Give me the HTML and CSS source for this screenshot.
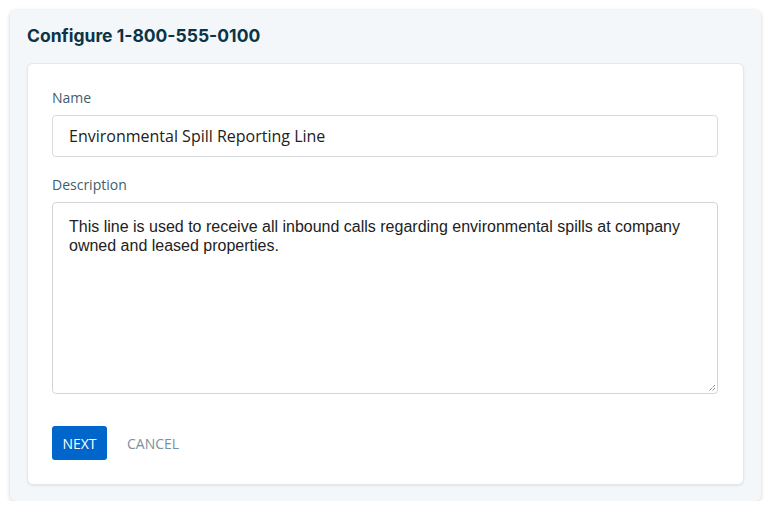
FILE: index.html
```html
<!DOCTYPE html>
<html>
<head>
<meta charset="utf-8">
<link rel="stylesheet" href="styles.css">
</head>
<body>
<div class="panel">
  <h2 class="title">Configure 1-800-555-0100</h2>
  <div class="card">
    <label class="label">Name</label>
    <div class="input">Environmental Spill Reporting Line</div>
    <label class="label label-desc">Description</label>
    <div class="textarea">This line is used to receive all inbound calls regarding environmental spills at company owned and leased properties.
      <svg class="grip" width="8" height="8" viewBox="0 0 8 8"><path d="M7 1L1 7M7 4L4 7" stroke="#555" stroke-width="1" stroke-dasharray="1 1" fill="none"/></svg>
    </div>
    <div class="actions">
      <button class="btn btn-primary">NEXT</button>
      <button class="btn btn-link">CANCEL</button>
    </div>
  </div>
</div>
</body>
</html>
```

FILE: styles.css
```css
html, body { margin: 0; padding: 0; background: #ffffff; }
body { padding: 10px 10px 0 10px; font-family: "Open Sans", "Liberation Sans", sans-serif; }
.panel {
  width: 751px;
  height: 491px;
  box-sizing: border-box;
  background: #f4f7fa;
  border-radius: 6px;
  box-shadow: 0 1px 4px rgba(0,0,0,0.18);
  padding: 14px 17px 16px 17px;
}
.title {
  margin: 0 0 15px 0;
  font-family: Inter, "Open Sans", sans-serif;
  font-weight: 700;
  font-size: 17.5px;
  line-height: 24px;
  color: #0b3447;
}
.card {
  background: #fff;
  border: 1px solid #e2e8ec;
  border-radius: 6px;
  box-shadow: 0 1px 2px rgba(0,0,0,0.08);
  padding: 25px 25px 24px 24px;
  height: 422px;
  box-sizing: border-box;
}
.label {
  display: block;
  font-size: 14px;
  line-height: 18px;
  font-weight: 500;
  color: #40606e;
  margin-bottom: 8px;
}
.label-desc { margin-top: 19px; margin-bottom: 8px; }
.input {
  height: 42px;
  box-sizing: border-box;
  border: 1px solid #d8dcdf;
  border-radius: 4px;
  padding: 0 16px;
  font-size: 16px;
  line-height: 40px;
  color: #222;
}
.textarea {
  position: relative;
  height: 192px;
  box-sizing: border-box;
  border: 1px solid #d3d6d8;
  border-radius: 4px;
  padding: 14px 16px;
  font-family: "Liberation Sans", Arial, sans-serif;
  font-size: 16px;
  line-height: 19px;
  color: #222;
}
.grip { position: absolute; right: 1px; bottom: 1px; }
.actions { display: flex; gap: 20px; margin-top: 32px; align-items: center; }
.btn {
  font-family: "Open Sans", sans-serif;
  font-size: 14px;
  font-weight: 500;
  height: 34px;
  border: none;
  border-radius: 3px;
  padding: 0 10px;
  background: none;
  cursor: pointer;
}
.btn-primary { background: #0066cc; color: #fff; width: 55px; padding: 0; }
.btn-link { color: #7b909c; padding: 0; }
```
